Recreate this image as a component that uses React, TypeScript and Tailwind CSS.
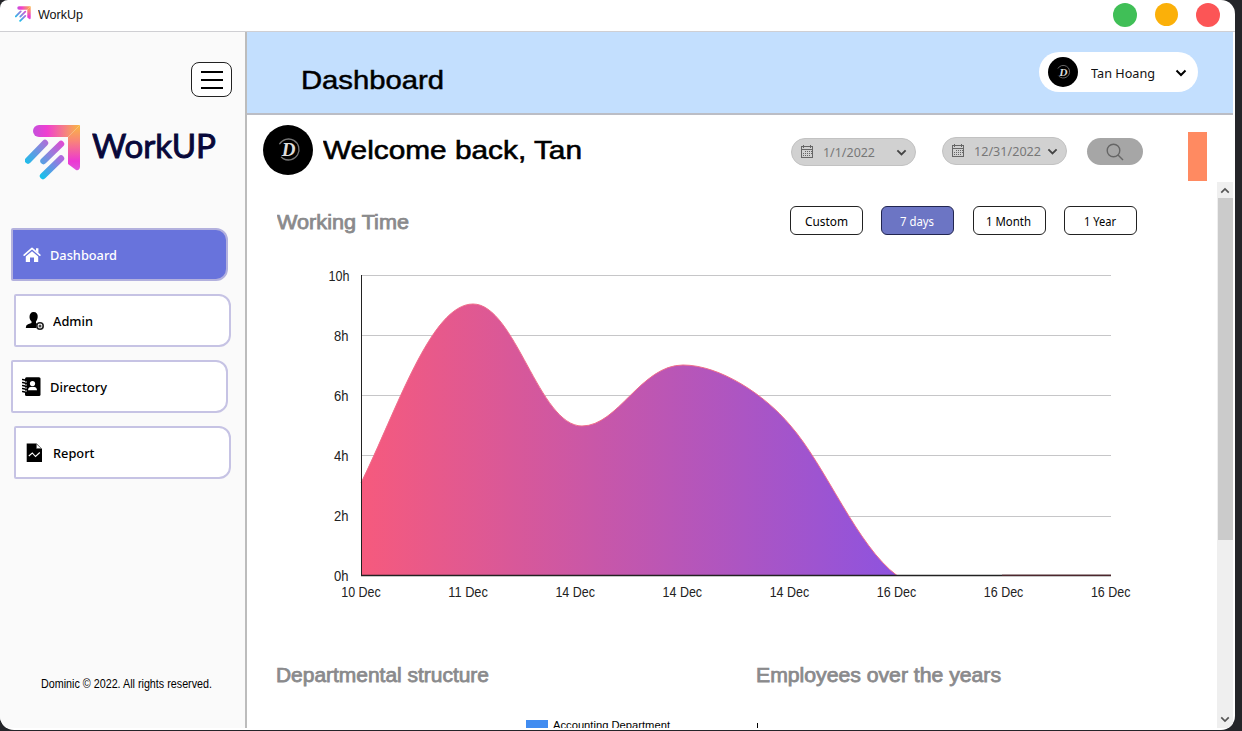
import React from 'react';

function LogoMark({ className }: { className: string }) {
  return (
    <svg viewBox="0 0 56 56" className={className}>
      <defs>
        <linearGradient id="lgTop" x1="0" y1="0" x2="1" y2="0">
          <stop offset="0" stopColor="#c44fdc" />
          <stop offset="0.3" stopColor="#f03fd0" />
          <stop offset="1" stopColor="#f9b840" />
        </linearGradient>
        <linearGradient id="lgSide" x1="0" y1="0" x2="0" y2="1">
          <stop offset="0" stopColor="#f9b840" />
          <stop offset="0.35" stopColor="#f98578" />
          <stop offset="0.8" stopColor="#ec38d2" />
          <stop offset="1" stopColor="#df55dc" />
        </linearGradient>
        <linearGradient id="lgBar" gradientUnits="userSpaceOnUse" x1="40" y1="16" x2="8" y2="46">
          <stop offset="0" stopColor="#ee3fd0" />
          <stop offset="0.45" stopColor="#957fdc" />
          <stop offset="1" stopColor="#1fbdea" />
        </linearGradient>
        <linearGradient id="lgBarB" gradientUnits="userSpaceOnUse" x1="37" y1="34" x2="17" y2="53">
          <stop offset="0" stopColor="#b06ade" />
          <stop offset="1" stopColor="#17c0ea" />
        </linearGradient>
      </defs>
      <path d="M14 1H55L43 13H14A6 6 0 0 1 14 1Z" fill="url(#lgTop)" />
      <path d="M55 1V43Q54 47 51 46L43 40V13Z" fill="url(#lgSide)" />
      <g fill="none" strokeWidth="6.4" strokeLinecap="round">
        <path d="M20 19L3 36.5" stroke="url(#lgBar)" />
        <path d="M36 20L18.5 37" stroke="url(#lgBar)" />
        <path d="M36 34.5L18 52" stroke="url(#lgBarB)" />
      </g>
    </svg>
  );
}

function Avatar({ className }: { className: string }) {
  return (
    <svg viewBox="0 0 50 50" className={className}>
      <circle cx="25" cy="25" r="25" fill="#000" />
      <circle cx="25.5" cy="24.5" r="10.5" fill="none" stroke="#777" strokeWidth="1.3" strokeDasharray="52 14" transform="rotate(-150 25.5 24.5)" />
      <text x="25.5" y="31" textAnchor="middle" fontFamily="Liberation Serif, serif" fontStyle="italic" fontWeight="700" fontSize="19" fill="#ddd">D</text>
    </svg>
  );
}

function HomeIcon() {
  return (
    <svg viewBox="0 0 18 18" className="ml-px size-[18px]">
      <path d="M1.2 9.2L9 2.4L16.8 9.2" fill="none" stroke="#fff" strokeWidth="1.7" strokeLinejoin="round" strokeLinecap="round" />
      <path d="M13 2.3H15.4V7L13 5Z" fill="#fff" />
      <path d="M9 5.2L15.2 10.5V16H11V11.4H7V16H2.8V10.5Z" fill="#fff" />
    </svg>
  );
}

function AdminIcon() {
  return (
    <svg viewBox="0 0 20 20" className="size-5">
      <path d="M8.5 1C11.5 1 13 3 12.7 6C12.5 8 11.7 9.5 11 10.5V12L12.5 13.3Q11 14.5 11.3 17H0.8Q0.7 14 3 13.2L6.5 12V10.5C5.3 9.3 4.5 7.8 4.5 6C4.5 3 6 1 8.5 1Z" fill="#000" />
      <circle cx="15" cy="15" r="3.2" fill="#fff" stroke="#222" strokeWidth="1.6" />
      <circle cx="15" cy="15" r="1.5" fill="#444" />
    </svg>
  );
}

function DirectoryIcon() {
  return (
    <svg viewBox="0 0 20 20" className="size-5">
      <rect x="3" y="0.2" width="15.5" height="18.8" rx="1.5" fill="#000" />
      <path d="M0.6 2.5L5 3.5M0.6 5.5L5 6.5M0.6 8.5L5 9.5M0.6 11.5L5 12.5M0.6 14.5L5 15.5" stroke="#000" strokeWidth="1.5" strokeLinecap="round" />
      <path d="M3 5H5M3 8H5M3 11H5M3 14H5" stroke="#fff" strokeWidth="0.8" />
      <circle cx="10.5" cy="6.5" r="2.6" fill="#fff" />
      <path d="M6 13.2Q6 9.8 10.5 9.8T15 13.2Z" fill="#fff" />
    </svg>
  );
}

function ReportIcon() {
  return (
    <svg viewBox="0 0 20 20" className="size-5">
      <path d="M1.7 0.5H11.5L17 6V19H1.7Z" fill="#000" />
      <path d="M11.5 1V5.5H16.5Z" fill="#fff" stroke="#555" strokeWidth="0.5" />
      <path d="M3.8 13L7.3 10L10.5 13.5L14.8 9.5" fill="none" stroke="#fff" strokeWidth="1.1" />
    </svg>
  );
}

function Chevron({ className }: { className: string }) {
  return (
    <svg viewBox="0 0 12 8" className={className} fill="none" stroke="currentColor" strokeWidth="2">
      <path d="M1.5 1.5L6 6L10.5 1.5" />
    </svg>
  );
}

function CalendarIcon() {
  return (
    <svg viewBox="0 0 14 14" className="size-3.5" fill="none" stroke="#666" shapeRendering="crispEdges">
      <rect x="1.5" y="1.5" width="11" height="11" />
      <path d="M1 4.5H13M3.5 0V3M10.5 0V3" />
      <path d="M5 6.5H12M3 8.5H12M3 10.5H10" strokeDasharray="1 1" />
    </svg>
  );
}

const nav = [
  { label: 'Dashboard', width: 67, icon: <HomeIcon />, box: 'ml-[11px] w-[217px] border-[#b3b1de] bg-[#6873dc] text-white' },
  { label: 'Admin', width: 40, icon: <AdminIcon />, box: 'ml-[14px] w-[217px] border-[#c6c3e4] bg-white text-black' },
  { label: 'Directory', width: 57, icon: <DirectoryIcon />, box: 'ml-[11px] w-[217px] border-[#c6c3e4] bg-white text-black' },
  { label: 'Report', width: 41.5, icon: <ReportIcon />, box: 'ml-[14px] w-[217px] border-[#c6c3e4] bg-white text-black' },
];

/* A single line of text that is set to a fixed measure. */
function Fit({ text, width, size, dy, className, weight }: { text: string; width: number; size: number; dy: number; className: string; weight?: number }) {
  return (
    <svg className={`shrink-0 ${className}`} fill="currentColor">
      <text x="0" y={dy} fontSize={size} fontWeight={weight} textLength={width} lengthAdjust="spacingAndGlyphs">{text}</text>
    </svg>
  );
}

function Sidebar() {
  return (
    <aside className="flex h-[696px] w-[247px] shrink-0 flex-col border-r-2 border-[#bcbcbc] bg-[#fafafa]">
      <button className="mt-[30px] ml-[191px] flex h-[35px] w-[41px] flex-col items-center justify-center gap-[6px] rounded-lg border border-[#222] bg-white">
        <span className="h-0.5 w-[22px] bg-black" />
        <span className="h-0.5 w-[22px] bg-black" />
        <span className="h-0.5 w-[22px] bg-black" />
      </button>
      <div className="mt-[27px] ml-[25px] flex h-14">
        <LogoMark className="size-14 shrink-0" />
        <Fit text="WorkUP" width={124} size={32.5} dy={33.5} weight={400} className="ml-[11px] h-14 w-[140px] font-['Lato',sans-serif] text-[#08083a] [stroke:#08083a] [stroke-width:0.9px]" />
      </div>
      <nav className="mt-12 flex flex-col gap-[13px]">
        {nav.map((n) => (
          <a key={n.label} className={`flex h-[53px] items-center rounded-l-[2px] rounded-r-[12px] border-2 pl-[9px] ${n.box}`}>
            <span className="w-[28px]">{n.icon}</span>
            <Fit text={n.label} width={n.width} size={13.3} dy={15} weight={500} className="h-5 w-[90px] font-['Noto_Sans',sans-serif]" />
          </a>
        ))}
      </nav>
      <Fit text="Dominic © 2022. All rights reserved." width={171} size={12} dy={14} className="mt-[195px] ml-[41px] h-6 w-[190px] font-['Liberation_Sans',sans-serif] text-black" />
    </aside>
  );
}

function DatePill({ text, width, className }: { text: string; width: number; className: string }) {
  return (
    <div className={`flex h-[28px] w-[125px] items-center rounded-full border border-[#c2c2c2] bg-[#d1d1d1] pl-[8px] text-[#666] ${className}`}>
      <CalendarIcon />
      <Fit text={text} width={width} size={13} dy={14} className="ml-[9px] h-[19px] w-[71px] font-['Noto_Sans',sans-serif] text-[#777]" />
      <Chevron className="mt-px ml-[2px] w-[11px] text-[#444]" />
    </div>
  );
}

const ranges = [
  { label: 'Custom', width: 43, box: 'border-[#222] bg-white text-black' },
  { label: '7 days', width: 34, box: 'border-[#222650] bg-[#6c75c4] text-white' },
  { label: '1 Month', width: 45, box: 'border-[#222] bg-white text-black' },
  { label: '1 Year', width: 32, box: 'border-[#222] bg-white text-black' },
];

const yTicks = [
  { t: '10h', y: 15.5, tw: 21 },
  { t: '8h', y: 75.5, tw: 14.5 },
  { t: '6h', y: 135.5, tw: 14.5 },
  { t: '4h', y: 195.5, tw: 14.5 },
  { t: '2h', y: 256.5, tw: 14.5 },
  { t: '0h', y: 315.5, tw: 14.5 },
];
const xTicks = ['10 Dec', '11 Dec', '14 Dec', '14 Dec', '14 Dec', '16 Dec', '16 Dec', '16 Dec'];

function WorkingTimeChart() {
  const curve = 'M41 223C77 150 111 44 153 44C195 44 219 166 262 166C298 166 321 105 363 105C400 105 445 135 470 165C506 206 537 286 577 315.5';
  return (
    <svg width="820" height="350" viewBox="0 0 820 350" className="mt-[25px] ml-[73px] shrink-0 font-['Liberation_Sans',sans-serif]">
      <defs>
        <linearGradient id="area" x1="0" y1="0" x2="1" y2="0">
          <stop offset="0" stopColor="#f65a7d" />
          <stop offset="1" stopColor="#8e53df" />
        </linearGradient>
      </defs>
      {yTicks.map((k) => (
        <g key={k.t}>
          <path d={`M41 ${k.y}H791`} stroke="#c6c6c8" strokeWidth="1" />
          <text x={k.t === '10h' ? 29.5 : 28.5} y={k.t === '2h' ? 260.5 : k.y + 5} fontSize="14" textAnchor="end" textLength={k.tw} lengthAdjust="spacingAndGlyphs" fill="#222">{k.t}</text>
        </g>
      ))}
      <path d={`${curve}H41Z`} fill="url(#area)" />
      <path d={curve} fill="none" stroke="#f06f8c" strokeWidth="1" />
      <path d="M41.5 15V316" stroke="#222" />
      <path d="M41 315.5H791" stroke="#222" strokeWidth="1.4" />
      <path d="M682 315.2H791" stroke="#602a33" />
      {xTicks.map((t, i) => (
        <text key={i} x={41 + i * 107.1} y="337" fontSize="14" textAnchor="middle" textLength="39.5" lengthAdjust="spacingAndGlyphs" fill="#222">{t}</text>
      ))}
    </svg>
  );
}

function Main() {
  return (
    <main className="flex h-[696px] w-[986px] shrink-0 flex-col overflow-hidden font-['Liberation_Sans',sans-serif]">
      <header className="flex h-[83px] shrink-0 border-b-2 border-[#bbbdc5] bg-[#c3dffe]">
        <Fit text="Dashboard" width={143} size={26.5} dy={57} className="ml-[54px] h-[81px] w-[161px] text-black [stroke:#000] [stroke-width:0.5px]" />
        <div className="mt-5 ml-[577px] flex h-[40px] w-[159px] shrink-0 items-center rounded-full bg-white pl-[9px]">
          <Avatar className="size-[30px]" />
          <Fit text="Tan Hoang" width={64} size={13} dy={16} className="ml-[13px] h-5 w-[84px] font-['Noto_Sans',sans-serif] text-[#111]" />
          <Chevron className="mt-px w-[12px] text-black" />
        </div>
      </header>
      <div className="flex h-[67px] shrink-0 items-start">
        <Avatar className="mt-[10px] ml-[16px] size-[50px] shrink-0" />
        <Fit text="Welcome back, Tan" width={259} size={26.5} dy={44} className="ml-[10px] h-[66px] w-[469px] text-black [stroke:#000] [stroke-width:0.6px]" />
        <DatePill text="1/1/2022" width={52} className="mt-[23px] -ml-px" />
        <DatePill text="12/31/2022" width={67} className="mt-[22px] ml-[26px]" />
        <button className="mt-[23px] ml-[20px] flex h-[27px] w-[56px] items-center justify-center rounded-full bg-[#a6a6a6]">
          <svg viewBox="0 0 18 18" className="mr-px size-[18px]" fill="none" stroke="#666" strokeWidth="1.4">
            <circle cx="7.5" cy="7.5" r="6.3" />
            <path d="M12 12L17 17" />
          </svg>
        </button>
        <div className="mt-[17px] ml-[45px] h-[49px] w-[19px] bg-[#ff8a61]" />
      </div>
      <div className="flex min-h-0 grow">
        <div className="flex w-[970px] shrink-0 flex-col overflow-hidden">
          <div className="flex h-[53px] shrink-0 items-end">
            <Fit text="Working Time" width={132} size={19.5} dy={24} weight={400} className="ml-[30px] h-[30px] w-[150px] text-[#8a8a8c] [stroke:#8a8a8c] [stroke-width:0.75px]" />
            <div className="ml-[363px] flex gap-[18.3px]">
              {ranges.map((r) => (
                <button key={r.label} className={`flex h-[29px] w-[73px] items-center justify-center rounded-md border ${r.box}`}>
                  <svg width={r.width} height="18" fill="currentColor" className="mr-px overflow-visible font-['Noto_Sans',sans-serif]">
                    <text x="0" y="14" fontSize="12" textLength={r.width} lengthAdjust="spacingAndGlyphs">{r.label}</text>
                  </svg>
                </button>
              ))}
            </div>
          </div>
          <WorkingTimeChart />
          <div className="mt-[52px] flex h-[35px] shrink-0">
            <Fit text="Departmental structure" width={213} size={19.5} dy={20} weight={400} className="ml-[29px] h-[35px] w-[480px] text-[#8a8a8c] [stroke:#8a8a8c] [stroke-width:0.75px]" />
            <Fit text="Employees over the years" width={245} size={19.5} dy={20} weight={400} className="h-[35px] w-[280px] text-[#8a8a8c] [stroke:#8a8a8c] [stroke-width:0.75px]" />
          </div>
          <div className="mt-[23px] flex h-[8px] shrink-0">
            <span className="ml-[279px] h-[8px] w-[22px] bg-[#418cf0]" />
            <Fit text="Accounting Department" width={117} size={11.5} dy={9} className="ml-[5px] h-[8px] w-[204px] text-black" />
            <span className="mt-[3px] h-[5px] w-px bg-black" />
          </div>
        </div>
        <div className="flex w-[16px] shrink-0 flex-col items-center bg-[#efefef] text-[#555]">
          <Chevron className="mt-[5px] h-[7px] w-[10px] rotate-180" />
          <div className="mt-[4px] h-[342px] w-[15px] bg-[#cbcbcb]" />
          <Chevron className="mt-auto mb-[5px] h-[7px] w-[10px]" />
        </div>
      </div>
    </main>
  );
}

export default function App() {
  return (
    <div className="h-[731px] w-[1242px] overflow-hidden bg-[#242529]">
      <div className="flex h-[730px] w-[1235px] flex-col overflow-hidden rounded-tl-[8px] rounded-tr-[14px] rounded-b-[14px] bg-white">
        <div className="flex h-8 shrink-0 items-start border-b border-[#cfcfd3]">
          <LogoMark className="mt-[6px] ml-[15px] size-4" />
          <Fit text="WorkUp" width={45} size={12.5} dy={13} className="mt-[6px] ml-[7px] h-[20px] w-[90px] font-['Liberation_Sans',sans-serif] text-[#111]" />
          <span className="mt-[3px] ml-[985px] size-[24px] shrink-0 rounded-full bg-[#40bf57]" />
          <span className="mt-[3px] ml-[18px] size-[23px] shrink-0 rounded-full bg-[#fbb009]" />
          <span className="mt-[3px] ml-[18px] size-[24px] shrink-0 rounded-full bg-[#fc5556]" />
        </div>
        <div className="flex">
          <Sidebar />
          <Main />
        </div>
      </div>
    </div>
  );
}
